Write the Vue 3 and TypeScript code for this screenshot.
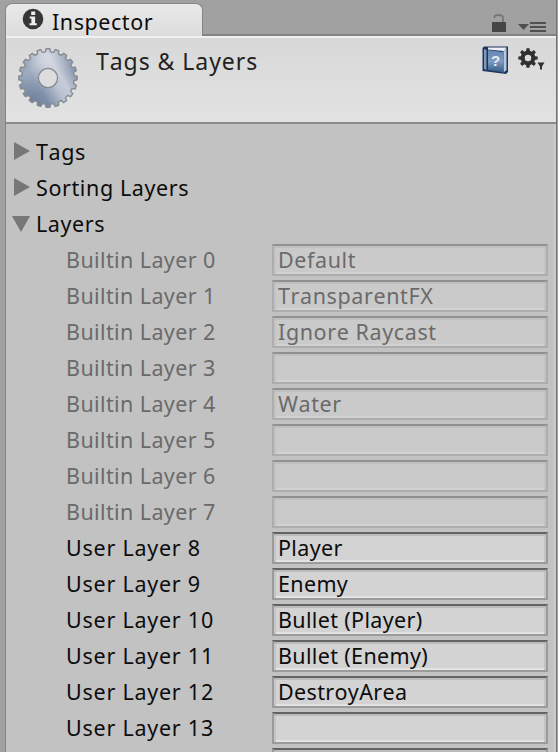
<script setup lang="ts">
interface Layer {
  label: string
  value: string
  builtin: boolean
}

const builtinNames: string[] = ['Default', 'TransparentFX', 'Ignore Raycast', '', 'Water', '', '', '']
const userNames: string[] = ['Player', 'Enemy', 'Bullet (Player)', 'Bullet (Enemy)', 'DestroyArea', '']

const layers: Layer[] = [
  ...builtinNames.map((value, i) => ({ label: `Builtin Layer ${i}`, value, builtin: true })),
  ...userNames.map((value, i) => ({ label: `User Layer ${i + 8}`, value, builtin: false })),
]

const sections: string[] = ['Tags', 'Sorting Layers']

function gearPath(c: number, outer: number, inner: number, teeth: number, hole: number): string {
  const step = (Math.PI * 2) / teeth
  const at = (r: number, a: number) => `${(c + r * Math.cos(a)).toFixed(2)} ${(c + r * Math.sin(a)).toFixed(2)}`
  const points: string[] = []
  for (let i = 0; i < teeth; i++) {
    const a = i * step - Math.PI / 2
    points.push(at(inner, a - step * 0.32), at(outer, a - step * 0.2), at(outer, a + step * 0.2), at(inner, a + step * 0.32))
  }
  return `M${points.join('L')}ZM${c - hole} ${c}a${hole} ${hole} 0 1 0 ${hole * 2} 0a${hole} ${hole} 0 1 0 ${-hole * 2} 0Z`
}

const bigGear = gearPath(30, 29.3, 26.2, 20, 9.6)
const smallGear = gearPath(10, 9.8, 7.4, 8, 3.3)
</script>

<template>
  <div class="window">
    <div class="panel">
      <div class="tabs">
        <div class="tab">
          <svg class="info" width="22" height="22" viewBox="0 0 22 22">
            <circle cx="11" cy="11" r="10.3" fill="#373737" />
            <path d="M9.2 3.5h4v3.4h-4zM7.7 8.5h5.4v6.7h1.7v2H7.5v-2h1.9v-4.7H7.7z" fill="#eee" />
          </svg>
          <span>Inspector</span>
        </div>
        <div class="tab-tools">
          <svg width="16" height="20" viewBox="0 0 16 20">
            <path d="M3.5 5V3.5Q4 2 7.5 2Q12 2 12 5V9" fill="none" stroke="#777" stroke-width="1.8" />
            <path d="M1 9h14v10H1z" fill="#464646" />
          </svg>
          <svg width="29" height="12" viewBox="0 0 29 12">
            <path d="M0 2h11l-5.5 6z" fill="#505050" />
            <path d="M12 0h16v2H12zM12 4h16v2H12zM12 8h16v2H12z" fill="#505050" />
          </svg>
        </div>
      </div>
      <div class="header">
        <svg class="gear" width="60" height="60" viewBox="0 0 60 60">
          <defs>
            <linearGradient id="steel" x1="0.15" y1="0.75" x2="0.9" y2="0.3">
              <stop offset="0" stop-color="#6a7c99" />
              <stop offset="0.25" stop-color="#7b8ca7" />
              <stop offset="0.55" stop-color="#b9c1d0" />
              <stop offset="0.72" stop-color="#c4cad7" />
              <stop offset="1" stop-color="#8492ab" />
            </linearGradient>
            <linearGradient id="shine" x1="0.2" y1="0" x2="0.85" y2="1">
              <stop offset="0" stop-color="#fff" stop-opacity="0.1" />
              <stop offset="0.25" stop-color="#fff" stop-opacity="0.3" />
              <stop offset="0.6" stop-color="#fff" stop-opacity="0.05" />
              <stop offset="0.9" stop-color="#fff" stop-opacity="0" />
            </linearGradient>
          </defs>
          <path :d="bigGear" fill="url(#steel)" fill-rule="evenodd" />
          <path :d="bigGear" fill="url(#shine)" fill-rule="evenodd" stroke="#858990" stroke-width="1.3" />
        </svg>
        <h1>Tags &amp; Layers</h1>
        <div class="header-tools">
          <svg width="28" height="29" viewBox="0 0 28 29">
            <defs>
              <linearGradient id="cover" x1="0" y1="0" x2="0" y2="1">
                <stop offset="0" stop-color="#6484b0" />
                <stop offset="0.5" stop-color="#7f9dc2" />
                <stop offset="1" stop-color="#315883" />
              </linearGradient>
            </defs>
            <path d="M2 0.5H26V26L24 28L0.5 25V2Z" fill="#1d345b" />
            <path d="M6 1.5H24.5L22 5L6 3.5Z" fill="#edf1f5" />
            <path d="M21.5 5L24.5 2V24L21.5 26.5Z" fill="#b9c8dc" />
            <path d="M2 3L4.5 4V24L2 23Z" fill="#7f9abc" />
            <path d="M6 4L21.5 6V26.5L6 24Z" fill="url(#cover)" />
            <text x="13.5" y="20" class="book-mark">?</text>
          </svg>
          <svg width="28" height="23" viewBox="0 0 28 23">
            <path :d="smallGear" fill="#303030" fill-rule="evenodd" />
            <path d="M19.5 14.5h7l-2.5 4v3h-2v-3z" fill="#303030" />
          </svg>
        </div>
      </div>
      <div class="content">
        <div v-for="name in sections" :key="name" class="fold">
          <svg width="18" height="20" viewBox="0 0 18 20"><path d="M2 0L18 9L2 18Z" fill="#777" /></svg>
          <span>{{ name }}</span>
        </div>
        <div class="fold">
          <svg width="18" height="20" viewBox="0 0 18 20"><path d="M0 2H18L9 18Z" fill="#777" /></svg>
          <span>Layers</span>
        </div>
        <div v-for="layer in layers" :key="layer.label" class="row" :class="{ disabled: layer.builtin }">
          <span class="label">{{ layer.label }}</span>
          <div class="field">{{ layer.value }}</div>
        </div>
        <div class="row">
          <span class="label"></span>
          <div class="field"></div>
        </div>
      </div>
    </div>
  </div>
</template>

<style>
body {
  background: #a1a1a1;
}
</style>

<style scoped>
.window {
  box-sizing: border-box;
  width: 558px;
  height: 752px;
  overflow: hidden;
  padding-left: 5px;
  background: #a1a1a1;
  color: #0c0c0c;
  font: 21.5px/36px 'Noto Sans', 'Open Sans', sans-serif;
  font-kerning: none;
  letter-spacing: 0.35px;
}
.panel {
  box-sizing: border-box;
  width: 552px;
  height: 752px;
  border-right: 1px solid #747474;
}
.tabs {
  box-sizing: border-box;
  height: 36px;
  padding-top: 3px;
  display: flex;
  justify-content: space-between;
  border-bottom: 2px solid #828282;
}
.tab {
  box-sizing: border-box;
  width: 198px;
  height: 33px;
  padding-left: 16px;
  display: flex;
  gap: 8px;
  border: 1px solid #858585;
  border-bottom: 0;
  border-radius: 7px 7px 0 0;
  background: linear-gradient(#e9e9e9, #dcdcdc);
  line-height: 36px;
  letter-spacing: 0.55px;
}
.info {
  margin-top: 4px;
}
.tab-tools {
  display: flex;
  align-items: flex-end;
  gap: 11px;
  padding: 0 9px 1px 0;
}
.tab-tools svg:last-child {
  margin-bottom: -1px;
}
.header {
  box-sizing: border-box;
  height: 88px;
  display: flex;
  border-left: 1px solid #858585;
  border-bottom: 2px solid #8a8a8a;
  background: linear-gradient(#f0f0f0 2px, #d8d8d8 2px, #e2e2e2);
}
.gear {
  margin: 12px 0 0 12px;
}
h1 {
  margin: 7px 0 0 18px;
  flex: 1;
  font-size: 23px;
  font-weight: 400;
  letter-spacing: 0.95px;
  color: #222;
}
.header-tools {
  display: flex;
  gap: 8px;
  padding: 10px 10px 0 0;
}
.header-tools svg:last-child {
  margin-top: 2px;
}
.book-mark {
  font: bold 15px 'Liberation Sans', sans-serif;
  text-anchor: middle;
  letter-spacing: 0;
  fill: #e4ebf3;
}
.content {
  height: 628px;
  box-sizing: border-box;
  padding-top: 10px;
  border-left: 1px solid #858585;
  border-right: 2px solid #cbcbcb;
  background: #c2c2c2;
}
.fold {
  height: 36px;
  display: flex;
  gap: 6px;
  padding-left: 6px;
  letter-spacing: 0.6px;
}
.fold svg {
  margin-top: 8px;
}
.row {
  height: 36px;
  display: flex;
  white-space: nowrap;
}
.label {
  width: 206px;
  padding-left: 60px;
  letter-spacing: 0.76px;
}
.field {
  box-sizing: border-box;
  width: 276px;
  height: 32px;
  margin-top: 2px;
  padding-left: 4px;
  border: 2px solid #9b9b9b;
  border-top-color: #636363;
  background: #d3d3d3;
  box-shadow: inset 0 2px #bcbcbc, inset 2px 0 #c4c4c4, inset -2px 0 #c4c4c4, inset 0 -2px #e3e3e3;
  line-height: 28px;
}
.disabled {
  color: #6a6a6a;
}
.disabled .label {
  letter-spacing: 0.4px;
}
.disabled .field {
  letter-spacing: 0.6px;
  border-color: #adadad;
  border-top-color: #919191;
  background: #cacaca;
  box-shadow: inset 0 2px #bfbfbf, inset 2px 0 #c3c3c3, inset -2px 0 #c3c3c3, inset 0 -2px #d2d2d2;
}
</style>
